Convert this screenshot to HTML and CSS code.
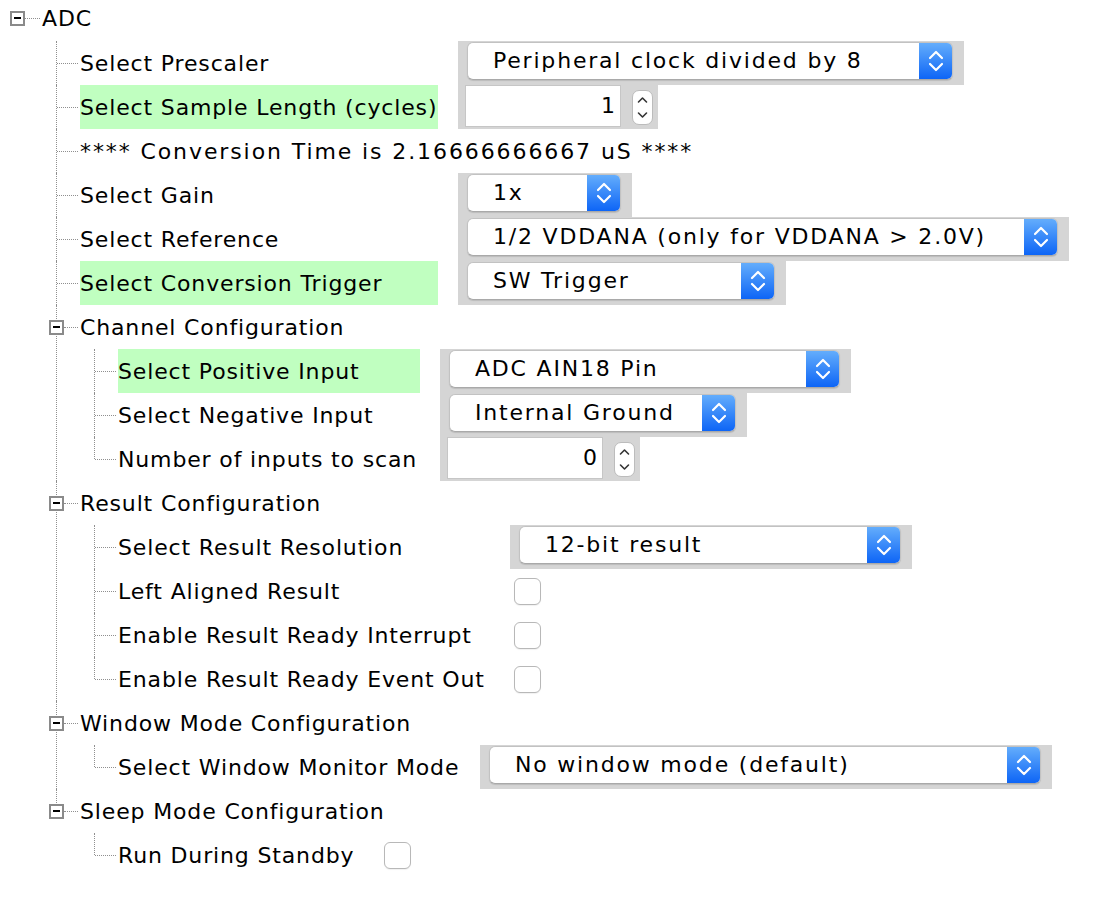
FILE: index.html
```html
<!DOCTYPE html>
<html>
<head>
<meta charset="utf-8">
<link rel="stylesheet" href="styles.css">
</head>
<body>
<div class="tree">
  <div class="root-row row">
    <span class="toggle"></span><span class="conn conn-root"></span><span class="label">ADC</span>
  </div>
  <ul class="l1">
    <li>
      <div class="row"><span class="stub"></span><span class="label lw-a">Select Prescaler</span>
        <div class="cell grey"><div class="select s-presc"><span class="val">Peripheral clock divided by 8</span><span class="arrows"><svg viewBox="0 0 34 38" width="34" height="38"><path d="M11 16 L17 10 L23 16 M11 22 L17 28 L23 22" fill="none" stroke="#fff" stroke-width="2.2" stroke-linecap="round" stroke-linejoin="round"/></svg></span></div></div>
      </div>
    </li>
    <li>
      <div class="row"><span class="stub"></span><span class="label lw-a hl">Select Sample Length (cycles)</span>
        <div class="cell grey spin-cell"><div class="field">1</div><span class="stepper"><svg viewBox="0 0 21 35" width="21" height="35"><path d="M6.5 12 L10.5 8 L14.5 12 M6.5 23 L10.5 27 L14.5 23" fill="none" stroke="#333" stroke-width="1.6" stroke-linecap="round" stroke-linejoin="round"/></svg></span></div>
      </div>
    </li>
    <li>
      <div class="row"><span class="stub"></span><span class="label wide">**** Conversion Time is 2.16666666667 uS ****</span></div>
    </li>
    <li>
      <div class="row"><span class="stub"></span><span class="label lw-a">Select Gain</span>
        <div class="cell grey"><div class="select s-gain"><span class="val">1x</span><span class="arrows"><svg viewBox="0 0 34 38" width="34" height="38"><path d="M11 16 L17 10 L23 16 M11 22 L17 28 L23 22" fill="none" stroke="#fff" stroke-width="2.2" stroke-linecap="round" stroke-linejoin="round"/></svg></span></div></div>
      </div>
    </li>
    <li>
      <div class="row"><span class="stub"></span><span class="label lw-a">Select Reference</span>
        <div class="cell grey"><div class="select s-ref"><span class="val">1/2 VDDANA (only for VDDANA &gt; 2.0V)</span><span class="arrows"><svg viewBox="0 0 34 38" width="34" height="38"><path d="M11 16 L17 10 L23 16 M11 22 L17 28 L23 22" fill="none" stroke="#fff" stroke-width="2.2" stroke-linecap="round" stroke-linejoin="round"/></svg></span></div></div>
      </div>
    </li>
    <li>
      <div class="row"><span class="stub"></span><span class="label lw-a hl">Select Conversion Trigger</span>
        <div class="cell grey"><div class="select s-trig"><span class="val">SW Trigger</span><span class="arrows"><svg viewBox="0 0 34 38" width="34" height="38"><path d="M11 16 L17 10 L23 16 M11 22 L17 28 L23 22" fill="none" stroke="#fff" stroke-width="2.2" stroke-linecap="round" stroke-linejoin="round"/></svg></span></div></div>
      </div>
    </li>
    <li>
      <div class="row"><span class="toggle"></span><span class="conn"></span><span class="label">Channel Configuration</span></div>
      <ul class="l2">
        <li>
          <div class="row"><span class="stub"></span><span class="label lw-b hl">Select Positive Input</span>
            <div class="cell grey"><div class="select s-pos"><span class="val">ADC AIN18 Pin</span><span class="arrows"><svg viewBox="0 0 34 38" width="34" height="38"><path d="M11 16 L17 10 L23 16 M11 22 L17 28 L23 22" fill="none" stroke="#fff" stroke-width="2.2" stroke-linecap="round" stroke-linejoin="round"/></svg></span></div></div>
          </div>
        </li>
        <li>
          <div class="row"><span class="stub"></span><span class="label lw-b">Select Negative Input</span>
            <div class="cell grey"><div class="select s-neg"><span class="val">Internal Ground</span><span class="arrows"><svg viewBox="0 0 34 38" width="34" height="38"><path d="M11 16 L17 10 L23 16 M11 22 L17 28 L23 22" fill="none" stroke="#fff" stroke-width="2.2" stroke-linecap="round" stroke-linejoin="round"/></svg></span></div></div>
          </div>
        </li>
        <li>
          <div class="row"><span class="stub"></span><span class="label lw-b">Number of inputs to scan</span>
            <div class="cell grey spin-cell"><div class="field">0</div><span class="stepper"><svg viewBox="0 0 21 35" width="21" height="35"><path d="M6.5 12 L10.5 8 L14.5 12 M6.5 23 L10.5 27 L14.5 23" fill="none" stroke="#333" stroke-width="1.6" stroke-linecap="round" stroke-linejoin="round"/></svg></span></div>
          </div>
        </li>
      </ul>
    </li>
    <li>
      <div class="row"><span class="toggle"></span><span class="conn"></span><span class="label">Result Configuration</span></div>
      <ul class="l2">
        <li>
          <div class="row"><span class="stub"></span><span class="label lw-c">Select Result Resolution</span>
            <div class="cell grey"><div class="select s-res"><span class="val">12-bit result</span><span class="arrows"><svg viewBox="0 0 34 38" width="34" height="38"><path d="M11 16 L17 10 L23 16 M11 22 L17 28 L23 22" fill="none" stroke="#fff" stroke-width="2.2" stroke-linecap="round" stroke-linejoin="round"/></svg></span></div></div>
          </div>
        </li>
        <li>
          <div class="row"><span class="stub"></span><span class="label lw-c">Left Aligned Result</span>
            <div class="cell check-cell"><span class="checkbox"></span></div>
          </div>
        </li>
        <li>
          <div class="row"><span class="stub"></span><span class="label lw-c">Enable Result Ready Interrupt</span>
            <div class="cell check-cell"><span class="checkbox"></span></div>
          </div>
        </li>
        <li>
          <div class="row"><span class="stub"></span><span class="label lw-c">Enable Result Ready Event Out</span>
            <div class="cell check-cell"><span class="checkbox"></span></div>
          </div>
        </li>
      </ul>
    </li>
    <li>
      <div class="row"><span class="toggle"></span><span class="conn"></span><span class="label">Window Mode Configuration</span></div>
      <ul class="l2">
        <li>
          <div class="row"><span class="stub"></span><span class="label lw-d">Select Window Monitor Mode</span>
            <div class="cell grey"><div class="select s-win"><span class="val">No window mode (default)</span><span class="arrows"><svg viewBox="0 0 34 38" width="34" height="38"><path d="M11 16 L17 10 L23 16 M11 22 L17 28 L23 22" fill="none" stroke="#fff" stroke-width="2.2" stroke-linecap="round" stroke-linejoin="round"/></svg></span></div></div>
          </div>
        </li>
      </ul>
    </li>
    <li>
      <div class="row"><span class="toggle"></span><span class="conn"></span><span class="label">Sleep Mode Configuration</span></div>
      <ul class="l2">
        <li>
          <div class="row"><span class="stub"></span><span class="label lw-e">Run During Standby</span>
            <div class="cell check-cell"><span class="checkbox"></span></div>
          </div>
        </li>
      </ul>
    </li>
  </ul>
</div>
</body>
</html>
```
FILE: styles.css
```css
html, body {
  margin: 0;
  padding: 0;
  background: #fff;
}
body {
  font-family: "DejaVu Sans", Verdana, sans-serif;
  font-size: 22px;
  letter-spacing: 0.85px;
  color: #000;
}
.tree {
  padding-left: 10px;
}
ul {
  list-style: none;
  margin: 0;
  padding: 0;
}
.l1 {
  margin-left: 39px;
  margin-top: 5px;
}
.l2 {
  margin-left: 38px;
}
li {
  position: relative;
}
li::before {
  content: "";
  position: absolute;
  left: 7px;
  top: 0;
  bottom: 0;
  border-left: 1px dotted #8f8f8f;
}
li:last-child::before {
  bottom: auto;
  height: 22px;
}
.row {
  display: flex;
  align-items: center;
  height: 44px;
}
.root-row {
  height: 36px;
}
.toggle {
  position: relative;
  width: 15px;
  height: 15px;
  box-sizing: border-box;
  border: 2px solid #8a8a8a;
  background: #fff;
  display: flex;
  align-items: center;
  justify-content: center;
  flex: none;
}
.toggle::after {
  content: "";
  width: 7px;
  height: 2px;
  background: #000;
}
.conn {
  width: 14px;
  margin-right: 2px;
  border-top: 1px dotted #8f8f8f;
  flex: none;
}
.conn-root {
  width: 15px;
}
.stub {
  width: 21px;
  margin-left: 8px;
  margin-right: 2px;
  border-top: 1px dotted #8f8f8f;
  flex: none;
}
.label {
  white-space: nowrap;
  align-self: stretch;
  display: flex;
  align-items: center;
  flex: none;
}
.wide {
  letter-spacing: 1.9px;
}
.hl {
  background: #c0ffc0;
}
.lw-a { width: 358px; }
.lw-b { width: 302px; }
.lw-c { width: 372px; }
.lw-d { width: 342px; }
.lw-e { width: 242px; }

.cell {
  margin-left: 20px;
  align-self: stretch;
  display: flex;
  align-items: flex-start;
  flex: none;
}
.grey {
  background: #d5d5d5;
  padding-left: 9px;
  padding-right: 11px;
}
.select {
  margin-top: 1px;
  height: 38px;
  box-sizing: border-box;
  border: 1px solid #c2c2c2;
  border-bottom-color: #a9a9a9;
  border-radius: 6px;
  background: #fff;
  box-shadow: 0 1px 1px rgba(0, 0, 0, 0.12);
  display: flex;
  align-items: center;
  overflow: hidden;
}
.val {
  flex: 1;
  padding-left: 25px;
  white-space: nowrap;
  margin-top: -2px;
  letter-spacing: 1.8px;
}
.arrows {
  width: 34px;
  align-self: stretch;
  background: linear-gradient(#66affc, #0b63f6);
  display: flex;
  align-items: center;
  justify-content: center;
  margin: -1px -1px -1px 0;
}
.arrows svg {
  display: block;
}
.s-presc { width: 486px; }
.s-gain { width: 154px; }
.s-ref { width: 591px; }
.s-trig { width: 308px; }
.s-pos { width: 391px; }
.s-neg { width: 287px; }
.s-res { width: 382px; }
.s-win { width: 552px; }

.spin-cell {
  padding-left: 7px;
  padding-right: 5px;
}
.field {
  width: 156px;
  height: 42px;
  box-sizing: border-box;
  border: 1px solid #c6c6c6;
  background: #fff;
  text-align: right;
  padding-right: 5px;
  line-height: 40px;
  letter-spacing: 0;
}
.stepper {
  margin-left: 11px;
  margin-top: 5px;
  width: 21px;
  height: 35px;
  box-sizing: border-box;
  border: 1px solid #bcbcbc;
  border-radius: 7px;
  background: #fff;
  display: flex;
  align-items: center;
  justify-content: center;
  overflow: hidden;
}
.stepper svg {
  display: block;
  flex: none;
}
.check-cell {
  padding-left: 4px;
  align-items: center;
}
.checkbox {
  width: 27px;
  height: 27px;
  box-sizing: border-box;
  border: 1px solid #b8b8b8;
  border-radius: 6px;
  background: #fff;
  box-shadow: 0 1px 1px rgba(0, 0, 0, 0.06);
}
```
